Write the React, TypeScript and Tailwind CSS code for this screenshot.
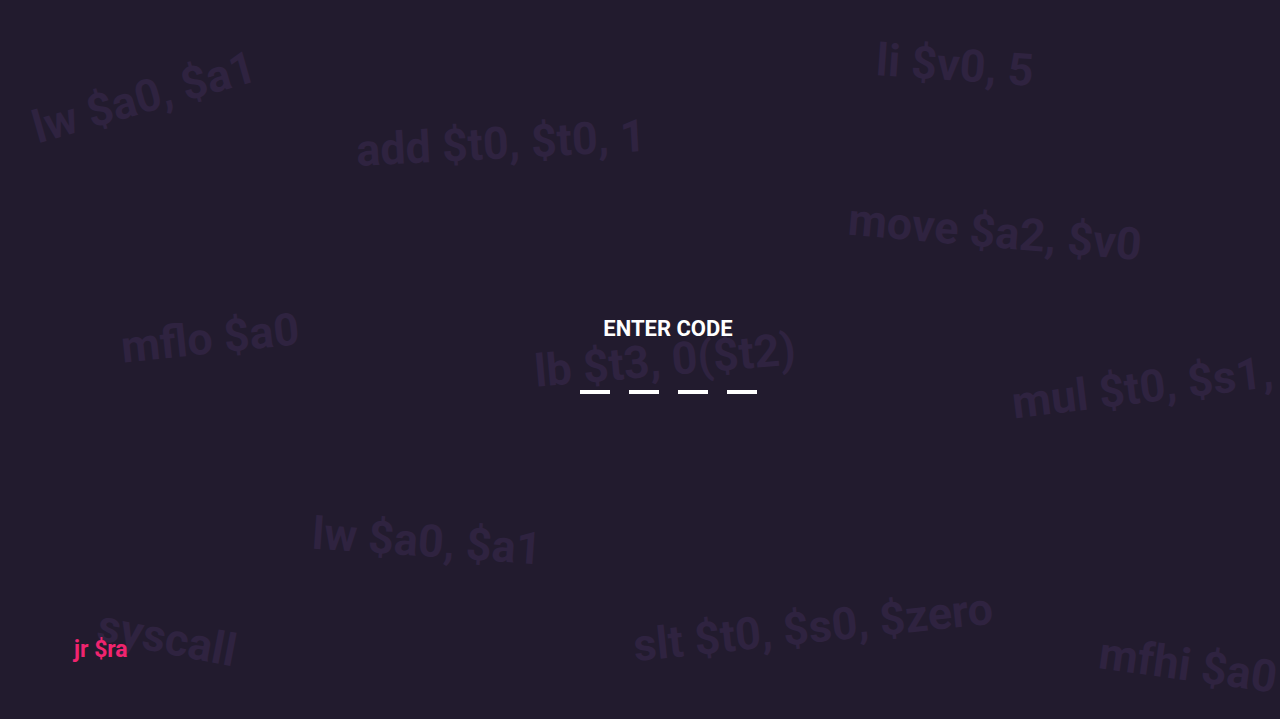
const bgWords = [
  { text: "lw $a0, $a1", className: "left-[144px] top-[97px] -rotate-[16deg]" },
  { text: "add $t0, $t0, 1", className: "left-[501px] top-[143px] -rotate-[3deg]" },
  { text: "li $v0, 5", className: "left-[955px] top-[65px] rotate-[4deg]" },
  { text: "move $a2, $v0", className: "left-[995px] top-[232px] rotate-[5deg]" },
  { text: "mflo $a0", className: "left-[210px] top-[338px] -rotate-[6deg]" },
  { text: "lb $t3, 0($t2)", className: "left-[665px] top-[360px] -rotate-[5deg]" },
  { text: "mul $t0, $s1, $s2", className: "left-[1185px] top-[382px] -rotate-[7deg]" },
  { text: "lw $a0, $a1", className: "left-[427px] top-[541px] rotate-[4deg]" },
  { text: "syscall", className: "left-[167px] top-[638px] rotate-[11deg]" },
  { text: "slt $t0, $s0, $zero", className: "left-[813px] top-[627px] -rotate-[6deg]" },
  { text: "mfhi $a0", className: "left-[1188px] top-[665px] rotate-[8deg]" },
];

const CodeSlot = () => <div className="h-[4px] w-[30px] bg-white" />;

const App = () => {
  return (
    <div className="relative h-[719px] w-full overflow-hidden bg-[#221b2e] font-['Roboto','Noto_Sans',sans-serif]">
      {bgWords.map((w, i) => (
        <span
          key={i}
          className={`absolute -translate-x-1/2 -translate-y-1/2 whitespace-nowrap text-[45px] font-bold leading-none text-[#2f2340] select-none ${w.className}`}
        >
          {w.text}
        </span>
      ))}

      <div className="relative flex h-full flex-col items-center justify-center pb-[10px] pl-[56px]">
        <h1 className="text-[22px] font-bold leading-[28px] text-white">ENTER CODE</h1>
        <div className="mt-[47px] flex gap-[19px]">
          <CodeSlot />
          <CodeSlot />
          <CodeSlot />
          <CodeSlot />
        </div>
      </div>

      <div className="absolute bottom-[57px] left-[74px] text-[23px] font-bold leading-[24px] text-[#f0246f]">
        jr $ra
      </div>
    </div>
  );
};

export default App;
